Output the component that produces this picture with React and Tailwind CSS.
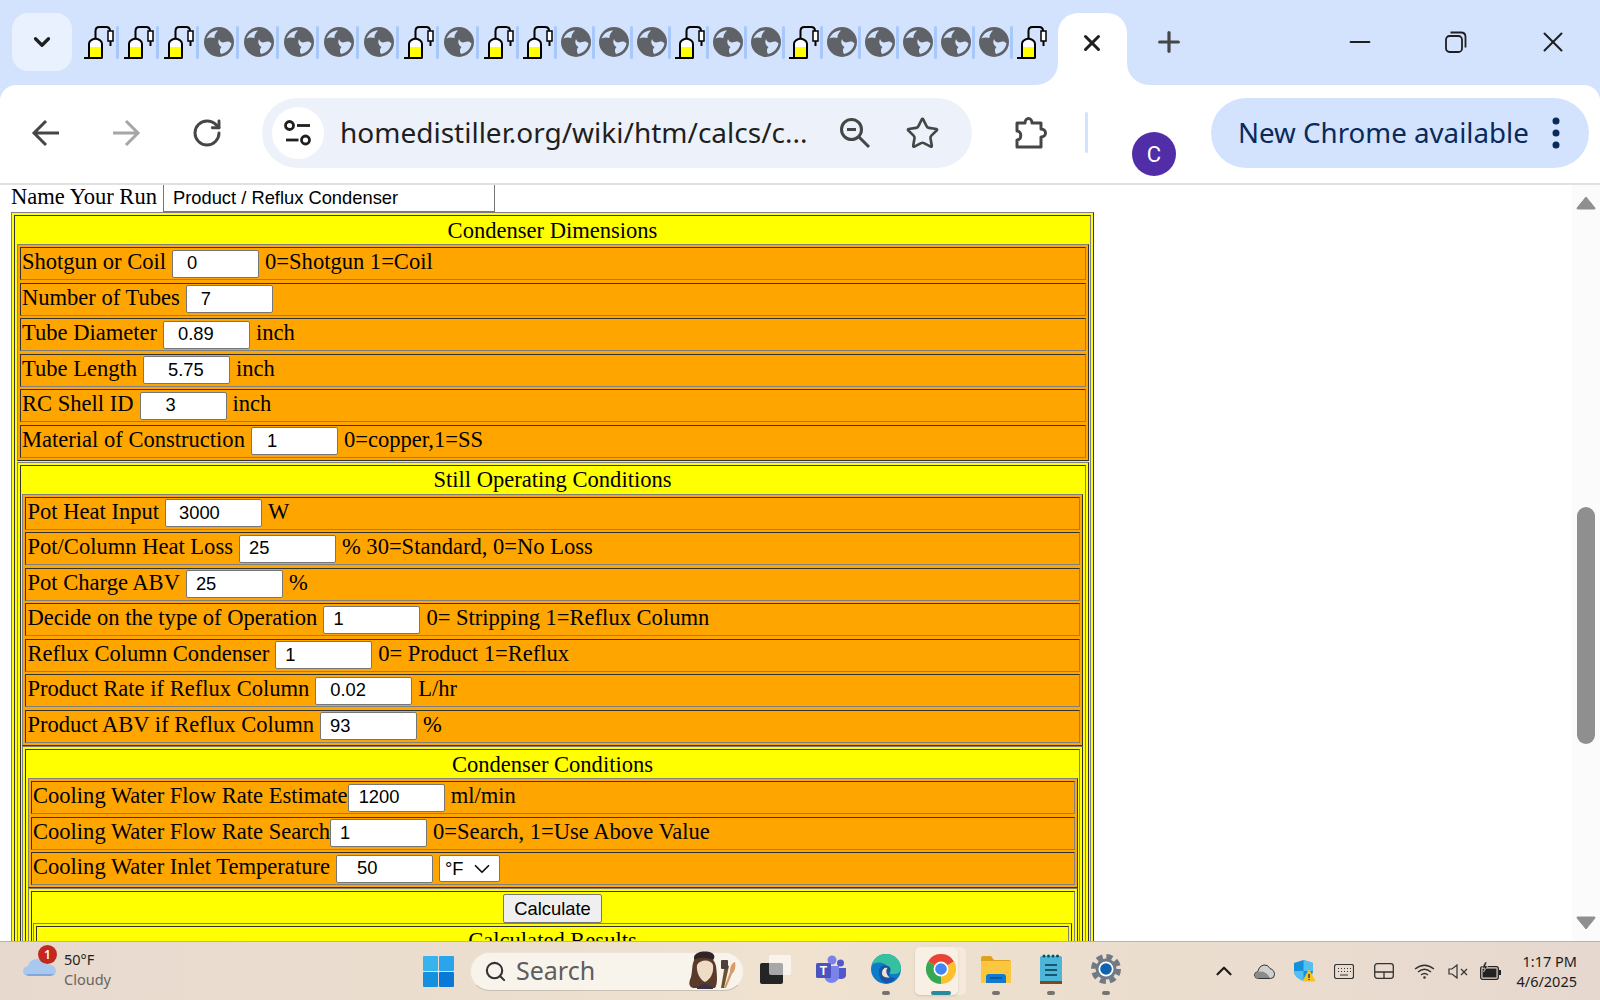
import React from "react";
import { Star, RotateCw, Search, ChevronUp, ChevronDown, Plus, X, Minus } from "lucide-react";

// favicons in the tab strip, d = distiller, g = globe
const TABS = ["d", "d", "d", "g", "g", "g", "g", "g", "d", "g", "d", "d", "g", "g", "g", "d", "g", "g", "d", "g", "g", "g", "g", "g", "d"];

const DIMENSIONS = [
  { label: "Shotgun or Coil", value: "0", pad: "pl-[14px]", gap: "ml-[6px]", suffix: "0=Shotgun 1=Coil" },
  { label: "Number of Tubes", value: "7", pad: "pl-[14px]", gap: "ml-[6px]" },
  { label: "Tube Diameter", value: "0.89", pad: "pl-[14px]", gap: "ml-[6px]", suffix: "inch" },
  { label: "Tube Length", value: "5.75", pad: "pl-[24px]", gap: "ml-[6px]", suffix: "inch" },
  { label: "RC Shell ID", value: "3", pad: "pl-[25px]", gap: "ml-[6px]", suffix: "inch" },
  { label: "Material of Construction", value: "1", pad: "pl-[15px]", gap: "ml-[6px]", suffix: "0=copper,1=SS" },
];

const OPERATING = [
  { label: "Pot Heat Input", value: "3000", pad: "pl-[13px]", gap: "ml-[6px]", suffix: "W" },
  { label: "Pot/Column Heat Loss", value: "25", pad: "pl-[9px]", gap: "ml-[6px]", suffix: "% 30=Standard, 0=No Loss" },
  { label: "Pot Charge ABV", value: "25", pad: "pl-[9px]", gap: "ml-[6px]", suffix: "%" },
  { label: "Decide on the type of Operation", value: "1", pad: "pl-[9px]", gap: "ml-[6px]", suffix: "0= Stripping 1=Reflux Column" },
  { label: "Reflux Column Condenser", value: "1", pad: "pl-[9px]", gap: "ml-[6px]", suffix: "0= Product 1=Reflux" },
  { label: "Product Rate if Reflux Column", value: "0.02", pad: "pl-[14px]", gap: "ml-[6px]", suffix: "L/hr" },
  { label: "Product ABV if Reflux Column", value: "93", pad: "pl-[9px]", gap: "ml-[6px]", suffix: "%" },
];

const CONDITIONS = [
  { label: "Cooling Water Flow Rate Estimate", value: "1200", pad: "pl-[10px]", gap: "ml-0", suffix: "ml/min" },
  { label: "Cooling Water Flow Rate Search", value: "1", pad: "pl-[9px]", gap: "ml-0", suffix: "0=Search, 1=Use Above Value" },
  { label: "Cooling Water Inlet Temperature", value: "50", pad: "pl-[20px]", gap: "ml-[6px]", unit: true },
];

function DistillerIcon() {
  return (
    <svg width="30" height="34" viewBox="0 0 30 34" fill="none">
      <path d="M5 32V19Q5 15 11.500 13.500Q18 15 18 19V32Z" fill="#fff" stroke="#000" strokeWidth="2" />
      <rect x="6" y="22" width="11" height="10" fill="#ffff00" />
      <path d="M0 33H18.500" stroke="#000" strokeWidth="2" />
      <path d="M11.500 13V6Q11.500 2 15.500 2H22Q26 2 26 6" stroke="#000" strokeWidth="2" />
      <rect x="24" y="6" width="5" height="10" fill="#fff" stroke="#000" strokeWidth="1.500" />
      <path d="M26.500 16V21" stroke="#000" strokeWidth="2" />
    </svg>
  );
}

function GlobeIcon() {
  return (
    <svg width="30" height="30" viewBox="0 0 30 30">
      <circle cx="15" cy="15" r="15" fill="#5f6368" />
      <path d="M2.500 11.500C5 5.500 10 3.500 14 3.500C12 6 10 8 10.500 11C7 10 4.500 10.500 2.500 11.500Z" fill="#d3e3fd" />
      <path d="M27.500 16.500C26 14 23 14 21 15C18.500 16.200 15.500 14.500 15 12C13.500 15 14.500 18.500 17.500 20C15.500 22 15.500 24.500 17 27C22 26 26.500 22 27.500 16.500Z" fill="#d3e3fd" />
    </svg>
  );
}

function TuneIcon() {
  return (
    <svg width="30" height="28" viewBox="0 0 30 28" fill="none" stroke="#1f1f1f" strokeWidth="2.800">
      <circle cx="6.500" cy="6.500" r="4" />
      <path d="M14 6.500H27" />
      <circle cx="22.500" cy="21" r="4" />
      <path d="M3 21H15.500" />
    </svg>
  );
}

function ZoomOutIcon() {
  return (
    <svg width="32" height="32" viewBox="0 0 32 32" fill="none" stroke="#444746" strokeWidth="3">
      <circle cx="12.500" cy="12.500" r="10" />
      <path d="M19.500 19.500L30 30M8 12.500H17" />
    </svg>
  );
}

function PuzzleIcon() {
  return (
    <svg width="34" height="34" viewBox="0 0 34 34" fill="none" stroke="#444746" strokeWidth="3" strokeLinejoin="round">
      <path d="M3 7H11C11 1 18 1 18 7H27V13C33 13 33 21 27 21V31H3V24C8 24 8 15 3 15Z" />
    </svg>
  );
}

function RestoreIcon() {
  return (
    <svg width="22" height="22" viewBox="0 0 22 22" fill="none" stroke="#1f1f1f" strokeWidth="1.800">
      <rect x="1" y="5" width="16" height="16" rx="3.500" />
      <path d="M5.500 1.500H16Q20.500 1.500 20.500 6V16.500" />
    </svg>
  );
}

function Chrome({ size = 30 }) {
  return (
    <svg width={size} height={size} viewBox="0 0 30 30">
      <path d="M15 15L2 7.500A15 15 0 0 1 28 7.500Z" fill="#ea4335" />
      <path d="M15 15L28 7.500A15 15 0 0 1 15 30Z" fill="#fbc02d" />
      <path d="M15 15L15 30A15 15 0 0 1 2 7.500Z" fill="#34a853" />
      <circle cx="15" cy="15" r="7.500" fill="#fff" />
      <circle cx="15" cy="15" r="5.800" fill="#4285f4" />
    </svg>
  );
}

function Edge() {
  return (
    <svg width="30" height="30" viewBox="0 0 30 30">
      <circle cx="15" cy="15" r="15" fill="#0f7cc9" />
      <path d="M1 11C3 3 10 0 15 0C24 0 30 7 30 14C30 19 26 20 22 20C18 20 17 18 18 15C16 9 6 6 1 11Z" fill="#35c1a0" />
      <path d="M8 17C8 12 13 10 17 12C20 13.500 20 16 19 18C17 21 19 24 25 24C22 28 17 30 14 29C9 27 8 22 8 17Z" fill="#1456a8" />
      <path d="M11 19C11 15 14 13 16.500 14C14.500 16 15 21 19 23.500C15 24 11 23 11 19Z" fill="#efe2cf" />
    </svg>
  );
}

function Teams() {
  return (
    <svg width="30" height="28" viewBox="0 0 30 28">
      <circle cx="24.500" cy="8" r="3.500" fill="#5059c9" />
      <path d="M19 13H30V20C30 23 27 24 25 24C22 24 19 22 19 19Z" fill="#5059c9" />
      <circle cx="16" cy="5" r="4.500" fill="#7b83eb" />
      <path d="M8 11H23V21C23 25 19 28 15.500 28C11 28 8 24 8 20Z" fill="#7b83eb" />
      <rect x="0" y="8" width="15" height="15" rx="1.500" fill="#4b53bc" />
      <text x="7.500" y="20" textAnchor="middle" fill="#fff" fontSize="12" fontWeight="700" fontFamily="Liberation Sans, sans-serif">T</text>
    </svg>
  );
}

function Folder() {
  return (
    <svg width="30" height="27" viewBox="0 0 30 27">
      <path d="M0 2Q0 0 2 0H10L13 4H28Q30 4 30 6V10H0Z" fill="#dda11d" />
      <rect x="0" y="5" width="30" height="22" rx="1" fill="#fcc73f" />
      <path d="M5 27V21Q5 18 8 18H22Q25 18 25 21V27Z" fill="#0f7ad1" />
      <path d="M9 22H21" stroke="#0a4f8f" strokeWidth="1.500" />
    </svg>
  );
}

function Notepad() {
  return (
    <svg width="22" height="30" viewBox="0 0 22 30">
      <rect x="0" y="2" width="22" height="26" rx="1.500" fill="#4db5d8" />
      <rect x="0" y="27" width="22" height="3" fill="#7b4a1e" />
      <g fill="#0d4a66">
        <circle cx="4" cy="2" r="1.500" />
        <circle cx="8.500" cy="2" r="1.500" />
        <circle cx="13" cy="2" r="1.500" />
        <circle cx="17.500" cy="2" r="1.500" />
      </g>
      <path d="M5 11H17M5 16H17M5 21H17" stroke="#17566f" strokeWidth="2" />
    </svg>
  );
}

function Gear() {
  return (
    <svg width="30" height="30" viewBox="0 0 30 30">
      <circle cx="15" cy="15" r="12.500" fill="none" stroke="#6f7a85" strokeWidth="5" strokeDasharray="6 3.820" />
      <circle cx="15" cy="15" r="10.500" fill="#6f7a85" />
      <circle cx="15" cy="15" r="7.500" fill="#fff" />
      <circle cx="15" cy="15" r="5.800" fill="#0f62b0" />
    </svg>
  );
}

function Painter() {
  return (
    <svg width="48" height="40" viewBox="0 0 48 40">
      <path d="M5 38C0 36 1 32 3 27C5 20 3 11 9 7C15 4 26 6 28 16C29 24 30 34 27 38Z" fill="#5a3a28" />
      <path d="M6 7C7 2 17 0 24 3C27 5 27 8 25 10C18 7 11 7 6 10Z" fill="#2d2528" />
      <path d="M9 15C12 9 23 9 25 15C26 22 23 29 17 32C12 30 8 22 9 15Z" fill="#f0dcc6" />
      <path d="M9 38C12 33 21 33 25 38V39H9Z" fill="#3a3346" />
      <path d="M37 14L33 38H36L41 16Z" fill="#6d5230" />
      <rect x="33" y="10" width="7" height="9" rx="1" fill="#4b4138" />
      <path d="M42 22C42 16 44 13 47 12C48 16 47 21 44 24L38 38H36Z" fill="#d79c6a" />
    </svg>
  );
}

function TaskView() {
  return (
    <div className="relative w-[31px] h-[29px]">
      <div className="absolute left-0 bottom-0 w-[23px] h-[21px] rounded-[2px] bg-[#242424]" />
      <div className="absolute right-0 top-0 w-[22px] h-[20px] rounded-[2px] bg-white/60" />
    </div>
  );
}

function Frame({ bg, gap = "", mt = "", children }) {
  return (
    <div className={`flex flex-col ${bg} ${gap} ${mt} border border-t-[#808080] border-l-[#808080] border-r-[#333333] border-b-[#333333] p-[2px]`}>
      {children}
    </div>
  );
}

function Cell({ children }) {
  return (
    <div className="border border-t-[#333333] border-l-[#333333] border-r-[#808080] border-b-[#808080] p-[1.5px]">
      {children}
    </div>
  );
}

function Heading({ children }) {
  return <div className="h-[26.6px] leading-[26px] text-center whitespace-nowrap">{children}</div>;
}

function Row({ row, width }) {
  return (
    <div className="flex items-center h-[33px] pl-[1.5px] whitespace-nowrap border border-t-[#333333] border-l-[#333333] border-r-[#808080] border-b-[#808080]">
      <span className="pb-[3px]">{row.label}</span>
      <input
        readOnly
        value={row.value}
        className={`${row.gap} ${width} ${row.pad} h-[28px] pb-[1px] bg-white text-black border border-[#767676] rounded-[2px] text-[18.33px] font-['Liberation_Sans',sans-serif]`}
      />
      {row.suffix && <span className="ml-[6px] pb-[3px]">{row.suffix}</span>}
      {row.unit && (
        <div className="flex items-center ml-[6px] w-[61px] h-[27px] pl-[5px] gap-[6px] bg-white border border-[#767676] rounded-[2px] text-[18.33px] font-['Liberation_Sans',sans-serif]">
          °F
          <ChevronDown size={26} strokeWidth={1.600} color="#111111" />
        </div>
      )}
    </div>
  );
}

function Rows({ rows, width }) {
  return (
    <Frame bg="bg-[#ffa500]" gap="gap-[2.5px]">
      {rows.map((r) => (
        <Row key={r.label} row={r} width={width} />
      ))}
    </Frame>
  );
}

function TabStrip() {
  return (
    <div className="flex h-[85px] bg-white">
      <div className="flex items-start w-[1058px] h-full bg-[#d3e3fd] rounded-br-[22px]">
        <button className="flex items-center justify-center w-[60px] h-[58px] ml-[12px] mt-[13px] rounded-[16px] bg-[#e9f1fe]">
          <ChevronDown size={26} strokeWidth={3} color="#1f1f1f" />
        </button>
        <div className="flex items-center ml-[7px] mt-[25px] h-[34px]">
          {TABS.map((t, i) => (
            <div key={i} className={`flex items-center h-full ${i < 11 ? "w-[40px]" : "w-[38px]"}`}>
              <div className={`flex justify-center pl-[3px] ${i < 11 ? "w-[37px]" : "w-[35px]"}`}>
                {t === "d" ? <DistillerIcon /> : <GlobeIcon />}
              </div>
              {i < TABS.length - 1 && <div className="w-[3px] h-[33px] rounded-full bg-[#a8c7fa]" />}
            </div>
          ))}
        </div>
      </div>
      <div className="w-[69px] h-full bg-[#d3e3fd]">
        <div className="flex items-center justify-center h-[72px] mt-[13px] pr-[2px] bg-white rounded-t-[20px]">
          <X size={26} strokeWidth={2.800} color="#1f1f1f" className="-mt-[13px]" />
        </div>
      </div>
      <div className="flex items-start flex-1 h-full bg-[#d3e3fd] rounded-bl-[22px]">
        <Plus size={32} strokeWidth={2.400} color="#444746" className="ml-[26px] mt-[26px]" />
        <Minus size={32} strokeWidth={1.600} color="#1f1f1f" className="ml-[159px] mt-[26px]" />
        <div className="ml-[69px] mt-[31px]">
          <RestoreIcon />
        </div>
        <X size={34} strokeWidth={1.400} color="#1f1f1f" className="ml-[69px] mt-[25px]" />
      </div>
    </div>
  );
}

function Toolbar() {
  return (
    <div className="flex h-[100px] pt-[13px] pb-[2px] bg-white rounded-t-[16px] border-b-2 border-[#e1e1e1] font-['Noto_Sans',sans-serif]">
      <svg width="30" height="30" viewBox="0 0 30 30" fill="none" stroke="#444746" strokeWidth="3" className="ml-[31px] mt-[20px]">
        <path d="M28 15H3M15 3L3 15L15 27" />
      </svg>
      <svg width="30" height="30" viewBox="0 0 30 30" fill="none" stroke="#a4a6a8" strokeWidth="3" className="ml-[50px] mt-[20px]">
        <path d="M2 15H27M15 3L27 15L15 27" />
      </svg>
      <RotateCw size={32} strokeWidth={2.200} color="#444746" className="ml-[50px] mt-[19px]" />
      <div className="flex items-center w-[710px] h-[70px] ml-[39px] pl-[10px] bg-[#edf2fa] rounded-full">
        <div className="flex items-center justify-center w-[52px] h-[52px] rounded-full bg-white">
          <TuneIcon />
        </div>
        <span className="ml-[16px] -mt-[2px] w-[491px] text-[28px] leading-[36px] text-[#1f1f1f] whitespace-nowrap">
          homedistiller.org/wiki/htm/calcs/c...
        </span>
        <div className="ml-[8px]">
          <ZoomOutIcon />
        </div>
        <Star size={35} strokeWidth={1.800} color="#444746" className="ml-[34px]" />
      </div>
      <div className="ml-[42px] mt-[18px]">
        <PuzzleIcon />
      </div>
      <div className="w-[3px] h-[41px] ml-[37px] mt-[14px] rounded-full bg-[#d3e3fd]" />
      <div className="flex items-center justify-center w-[44px] h-[44px] ml-[44px] mt-[34px] rounded-full bg-[#512da8] text-white text-[22px] font-['Roboto',sans-serif]">
        C
      </div>
      <div className="flex items-center w-[378px] h-[70px] ml-[35px] pl-[27px] bg-[#d3e3fd] rounded-full text-[#0a2a5c] text-[27.7px] whitespace-nowrap">
        <span className="w-[291px]">New Chrome available</span>
        <svg width="8" height="32" viewBox="0 0 8 32" fill="#0a2a5c" className="ml-[23px]">
          <circle cx="4" cy="4" r="3.500" />
          <circle cx="4" cy="16" r="3.500" />
          <circle cx="4" cy="28" r="3.500" />
        </svg>
      </div>
    </div>
  );
}

function Form() {
  return (
    <div className="flex-1 min-w-0 overflow-hidden text-[22.55px] text-black font-['Liberation_Serif',serif]">
      <div className="flex h-[27px] pl-[11px]">
        <span className="leading-[24px] whitespace-nowrap">Name Your Run</span>
        <input
          readOnly
          value="Product / Reflux Condenser"
          className="ml-[6px] -mt-[1px] w-[332px] h-[28px] pl-[9px] bg-white text-black border border-[#767676] text-[18.33px] font-['Liberation_Sans',sans-serif]"
        />
      </div>
      <div className="w-[1083px] ml-[11px]">
        <Frame bg="bg-[#ffff00]">
          <Cell>
            <Heading>Condenser Dimensions</Heading>
            <Rows rows={DIMENSIONS} width="w-[87px]" />
            <Frame bg="bg-[#ffff00]" mt="mt-[1px]">
              <Cell>
                <Heading>Still Operating Conditions</Heading>
                <Rows rows={OPERATING} width="w-[97px]" />
                <Frame bg="bg-[#ffff00]" mt="mt-[0.5px]">
                  <Cell>
                    <Heading>Condenser Conditions</Heading>
                    <Rows rows={CONDITIONS} width="w-[97px]" />
                    <Frame bg="bg-[#ffff00]">
                      <Cell>
                        <div className="flex justify-center">
                          <button className="w-[99px] h-[29px] pb-[2px] bg-[#efefef] border border-[#767676] rounded-[2px] text-[18.33px] font-['Liberation_Sans',sans-serif]">
                            Calculate
                          </button>
                        </div>
                        <Frame bg="bg-[#ffff00]">
                          <Cell>
                            <Heading>Calculated Results</Heading>
                            <div className="h-[60px]" />
                          </Cell>
                        </Frame>
                      </Cell>
                    </Frame>
                  </Cell>
                </Frame>
              </Cell>
            </Frame>
          </Cell>
        </Frame>
      </div>
    </div>
  );
}

function Scrollbar() {
  return (
    <div className="flex flex-col items-center w-[28px] pt-[11px] bg-[#fbfbfb]">
      <svg width="20" height="14" viewBox="0 0 20 14" fill="#8f8f8f">
        <path d="M10 1L19 12Q19.500 13 18 13H2Q0.500 13 1 12Z" stroke="#8f8f8f" strokeLinejoin="round" />
      </svg>
      <div className="w-[18px] h-[237px] mt-[297px] rounded-full bg-[#8f8f8f]" />
      <svg width="20" height="14" viewBox="0 0 20 14" fill="#8f8f8f" className="mt-[172px]">
        <path d="M10 13L19 2Q19.500 1 18 1H2Q0.500 1 1 2Z" stroke="#8f8f8f" strokeLinejoin="round" />
      </svg>
    </div>
  );
}

function TaskSlot({ dot, children }) {
  return (
    <div className="flex flex-col items-center justify-end w-[55px] h-[48px]">
      <div className="flex items-center justify-center h-[44px]">{children}</div>
      <div className={`w-[8px] h-[4px] rounded-full ${dot ? "bg-[#77736c]" : "bg-transparent"}`} />
    </div>
  );
}

function TrayIcons() {
  return (
    <div className="flex items-center ml-[71px] h-full">
      <div className="flex justify-center w-[40px]">
        <ChevronUp size={26} strokeWidth={2} color="#1b1b1b" />
      </div>
      <div className="flex justify-center w-[40px]">
        <svg width="21" height="15" viewBox="0 0 21 15">
          <path d="M4.500 14.500Q0.500 14.500 0.500 11Q0.500 8 4 7.500Q5 2 10 1Q14 0.500 16 4.500Q20.500 6 20.500 10.500Q20.500 14.500 16.500 14.500Z" fill="#cfd0d0" stroke="#333333" strokeWidth="1" />
          <path d="M4.500 14Q1 14 1 11Q1 8.500 4 8Q10 6 14 11L16 14Z" fill="#8b8b8b" />
        </svg>
      </div>
      <div className="flex justify-center w-[40px]">
        <svg width="21" height="22" viewBox="0 0 21 22">
          <path d="M9.500 0L19 3V11Q19 17 9.500 21Q0 17 0 11V3Z" fill="#1490dd" />
          <path d="M9.500 0L19 3V11H9.500V21Q0 17 0 11H9.500Z" fill="#52c0f2" />
          <path d="M15 10L21 21H9Z" fill="#f7c325" stroke="#f7c325" strokeLinejoin="round" />
          <path d="M15 14V18M15 19V20" stroke="#1b1b1b" strokeWidth="1.200" />
        </svg>
      </div>
      <div className="flex justify-center w-[40px]">
        <svg width="20" height="15" viewBox="0 0 20 15" fill="none" stroke="#333333">
          <rect x="0.500" y="0.500" width="19" height="14" rx="2" strokeWidth="1.200" />
          <path d="M4 4.500H5M7 4.500H8M10 4.500H11M13 4.500H14M16 4.500H17M4 7.500H5M7 7.500H8M10 7.500H11M13 7.500H14M16 7.500H17M6 11H14" strokeWidth="1.200" />
        </svg>
      </div>
      <div className="flex justify-center w-[40px]">
        <svg width="20" height="16" viewBox="0 0 20 16" fill="none" stroke="#333333" strokeWidth="1.300">
          <rect x="0.700" y="0.700" width="18.600" height="14.600" rx="2.500" />
          <path d="M1 9H19M10 9V15" />
        </svg>
      </div>
      <div className="flex justify-center w-[40px]">
        <svg width="21" height="15" viewBox="0 0 21 15" fill="none" stroke="#333333" strokeWidth="1.300">
          <path d="M1 5Q10.500 -2.500 20 5M4 8Q10.500 2.500 17 8M7 11Q10.500 8 14 11" />
          <circle cx="10.500" cy="13.500" r="1.300" fill="#333333" stroke="none" />
        </svg>
      </div>
      <div className="flex justify-center w-[28px]">
        <svg width="20" height="15" viewBox="0 0 20 15" fill="none" stroke="#333333" strokeWidth="1.200">
          <path d="M1 5H4L9 1V14L4 10H1Z" />
          <path d="M13 5L19 11M19 5L13 11" />
        </svg>
      </div>
      <div className="flex justify-center w-[36px]">
        <svg width="21" height="18" viewBox="0 0 21 18">
          <rect x="0.700" y="4.700" width="17.600" height="12.600" rx="2" fill="none" stroke="#222222" strokeWidth="1.300" />
          <rect x="2.500" y="6.500" width="14" height="9" fill="#222222" />
          <rect x="19" y="8" width="2" height="5" fill="#222222" />
          <path d="M5 0L2 6H5L3.500 10L8 4H5.500L7 0Z" fill="#222222" stroke="#e6d8cd" strokeWidth="0.600" />
        </svg>
      </div>
    </div>
  );
}

function Taskbar() {
  return (
    <div className="flex items-center h-[59px] border-t border-[#b9b3ac] bg-gradient-to-r from-[#e7d9ce] via-[#f0e2cf] to-[#e6d8ce] font-['Noto_Sans',sans-serif]">
      <div className="relative w-[33px] h-[20px] ml-[23px] -mt-[12px]">
        <svg width="33" height="22" viewBox="0 0 33 22">
          <path d="M6 21Q0 21 0 16Q0 12 5 11Q7 4 14 4Q21 4 24 9Q33 10 33 16Q33 21 27 21Z" fill="#a9c8ee" />
          <path d="M3 19H31Q29 21 27 21H6Q4 21 3 19Z" fill="#7fa7dc" />
        </svg>
        <div className="absolute -top-[10px] right-[-1px] flex items-center justify-center w-[19px] h-[19px] rounded-full bg-[#c4281c] text-white text-[12px] font-semibold">
          1
        </div>
      </div>
      <div className="ml-[8px] -mt-[4px] w-[60px] text-[14.5px] leading-[20px] whitespace-nowrap">
        <div className="text-[#1f1f1f]">50°F</div>
        <div className="text-[#6a655f]">Cloudy</div>
      </div>
      <svg width="31" height="31" viewBox="0 0 31 31" className="ml-[299px]">
        <rect x="0" y="0" width="15" height="15" rx="1" fill="#39b3ee" />
        <rect x="16" y="0" width="15" height="15" rx="1" fill="#2aa4ea" />
        <rect x="0" y="16" width="15" height="15" rx="1" fill="#1590e0" />
        <rect x="16" y="16" width="15" height="15" rx="1" fill="#0a78d6" />
      </svg>
      <div className="flex items-center w-[274px] h-[39px] ml-[16px] pl-[13px] rounded-full bg-[#f8f3eb] border border-b-[#c8bfb2] border-t-[#ece4d8] border-x-[#ece4d8]">
        <Search size={23} strokeWidth={2.200} color="#333333" />
        <span className="ml-[9px] -mt-[2px] text-[25px] leading-none text-[#5d5d5d]">Search</span>
        <div className="ml-auto mr-[7px] -mt-[2px]">
          <Painter />
        </div>
      </div>
      <div className="flex items-center ml-[4px]">
        <TaskSlot>
          <TaskView />
        </TaskSlot>
        <TaskSlot>
          <Teams />
        </TaskSlot>
        <TaskSlot dot>
          <Edge />
        </TaskSlot>
        <div className="relative flex flex-col items-center justify-end w-[55px] h-[48px]">
          <div className="absolute left-[5px] top-0 w-[48px] h-[48px] rounded-[5px] bg-[#fbf3e9]/50" />
          <div className="absolute left-[2px] top-0 w-[43px] h-[48px] rounded-[5px] bg-[#f8f0e5] shadow-sm" />
          <div className="relative flex items-center justify-center h-[44px]">
            <Chrome />
          </div>
          <div className="relative w-[20px] h-[4px] rounded-full bg-[#2a8a9a]" />
        </div>
        <TaskSlot dot>
          <Folder />
        </TaskSlot>
        <TaskSlot dot>
          <Notepad />
        </TaskSlot>
        <TaskSlot dot>
          <Gear />
        </TaskSlot>
      </div>
      <TrayIcons />
      <div className="flex-1 pr-[23px] text-right text-[14.5px] leading-[20px] text-[#1b1b1b] whitespace-nowrap">
        <div>1:17 PM</div>
        <div>4/6/2025</div>
      </div>
    </div>
  );
}

export default function App() {
  return (
    <div className="flex flex-col h-screen overflow-hidden bg-white">
      <div className="bg-[#d3e3fd]">
        <TabStrip />
        <Toolbar />
      </div>
      <div className="flex flex-1 min-h-0">
        <Form />
        <Scrollbar />
      </div>
      <Taskbar />
    </div>
  );
}
